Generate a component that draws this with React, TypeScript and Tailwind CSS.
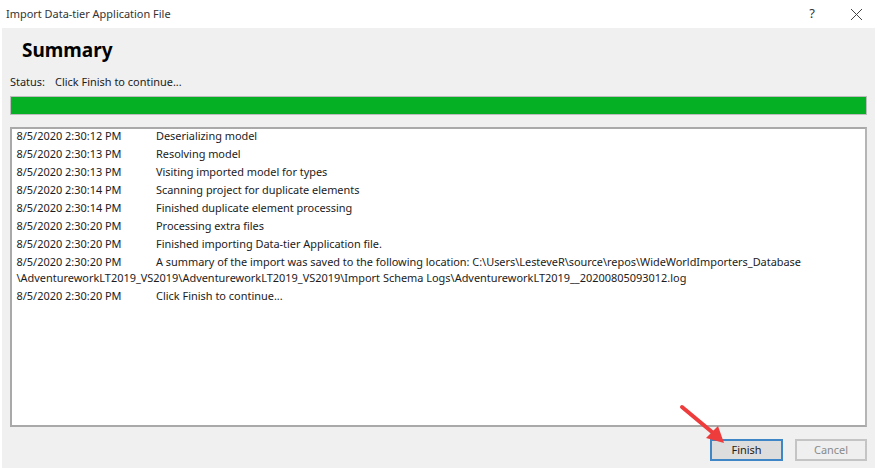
const font = { fontFamily: '"Noto Sans", "Open Sans", sans-serif' };

const rows = [
  ["8/5/2020 2:30:12 PM", "Deserializing model"],
  ["8/5/2020 2:30:13 PM", "Resolving model"],
  ["8/5/2020 2:30:13 PM", "Visiting imported model for types"],
  ["8/5/2020 2:30:14 PM", "Scanning project for duplicate elements"],
  ["8/5/2020 2:30:14 PM", "Finished duplicate element processing"],
  ["8/5/2020 2:30:20 PM", "Processing extra files"],
  ["8/5/2020 2:30:20 PM", "Finished importing Data-tier Application file."],
  ["8/5/2020 2:30:20 PM", "A summary of the import was saved to the following location: C:\\Users\\LesteveR\\source\\repos\\WideWorldImporters_Database"],
];

export default function App() {
  return (
    <div className="relative flex h-[468px] w-[877px] flex-col overflow-hidden bg-white text-[10.95px] text-[#1c1c1c]" style={font}>
      <div className="flex h-[28px] shrink-0 items-center justify-between pl-[6px] pr-[15px] text-[#333]">
        <span>Import Data-tier Application File</span>
        <div className="flex items-center gap-[36px]">
          <span className="text-[13px]">?</span>
          <svg width="11" height="11" viewBox="0 0 11 11" stroke="#444" strokeWidth="1" fill="none">
            <path d="M0 0 L11 11 M11 0 L0 11" />
          </svg>
        </div>
      </div>
      <div className="ml-[2px] mr-[2px] flex min-h-0 flex-1 flex-col bg-[#f0f0f0] pl-[8px] pr-[8px]">
        <div className="pl-[12px] pt-[7px] text-[19px] font-bold leading-[30px] text-black">Summary</div>
        <div className="mt-[9px] flex h-[16px] items-center">
          <span className="w-[45px]">Status:</span>
          <span>Click Finish to continue...</span>
        </div>
        <div className="mt-[6px] h-[19px] shrink-0 border border-[#bcbcbc] bg-[#06b025]" />
        <div className="mt-[12px] h-[300px] shrink-0 border-2 border-[#a9a9a9] border-r-[#b5b5b5] bg-white pl-[4.5px]">
          <div className="-mt-[2px]">
            {rows.map(([time, text]) => (
              <div key={text} className="flex h-[18px] items-center whitespace-nowrap">
                <span className="w-[139.5px] shrink-0">{time}</span>
                <span className="tracking-[-0.02px]">{text}</span>
              </div>
            ))}
            <div className="mb-[2px] flex h-[14px] items-center whitespace-nowrap">
              \AdventureworkLT2019_VS2019\AdventureworkLT2019_VS2019\Import Schema Logs\AdventureworkLT2019__20200805093012.log
            </div>
            <div className="flex h-[18px] items-center whitespace-nowrap">
              <span className="w-[139.5px] shrink-0">8/5/2020 2:30:20 PM</span>
              <span>Click Finish to continue...</span>
            </div>
          </div>
        </div>
        <div className="mt-[12px] flex justify-end gap-[12px]">
          <button className="h-[22px] w-[73px] border-2 border-[#3f86c6] bg-[#dddddd] text-[#1c1c1c]">Finish</button>
          <button className="h-[22px] w-[72px] border-2 border-[#c4c4c4] bg-[#efefef] text-[#8a8a8a]">Cancel</button>
        </div>
      </div>
      <svg className="absolute left-[675px] top-[400px]" width="56" height="46" viewBox="0 0 56 46">
        <path d="M7 7 L37 32" stroke="#ee3b3b" strokeWidth="4" strokeLinecap="round" fill="none" />
        <path d="M43 26 L49 43 L31 38 Z" fill="#ee3b3b" />
      </svg>
    </div>
  );
}
